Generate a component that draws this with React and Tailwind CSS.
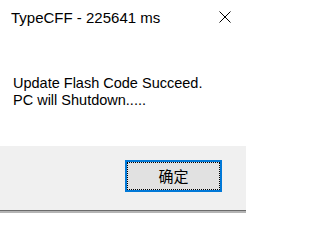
import React from 'react';

const CloseIcon = () => (
  <svg width="12" height="12" viewBox="0 0 12 12" className="block">
    <path d="M0.5 0.5 L11.5 11.5 M11.5 0.5 L0.5 11.5" stroke="#000" strokeWidth="1" fill="none" />
  </svg>
);

const App = () => {
  return (
    <div className="w-[246px] h-[213px] flex flex-col bg-white overflow-hidden font-['Liberation_Sans',Arial,sans-serif] text-black">
      {/* Title bar */}
      <div className="flex items-start justify-between pl-[11px] pr-[15px] pt-[9px]">
        <span className="text-[15px] leading-[18px]">TypeCFF - 225641 ms</span>
        <div className="pt-[2px]">
          <CloseIcon />
        </div>
      </div>

      {/* Message */}
      <div className="flex-1 pl-[13px] pt-[48px] text-[14.5px] leading-[17px]">
        <div>Update Flash Code Succeed.</div>
        <div>PC will Shutdown.....</div>
      </div>

      {/* Button area */}
      <div className="h-[64px] bg-[#f0f0f0] flex justify-end items-start pt-[14px] pr-[24px]">
        <button className="w-[97px] h-[32px] border-2 border-[#0078d7] bg-[#e1e1e1] p-0">
          <div className="w-full h-full border border-dotted border-black flex items-center justify-center text-[15px] font-['Noto_Sans_CJK_SC',sans-serif]">
            确定
          </div>
        </button>
      </div>
      <div className="h-[1px] bg-[#6b6b6b]" />
      <div className="h-[2px] bg-[#b4b4b4]" />
    </div>
  );
};

export default App;
